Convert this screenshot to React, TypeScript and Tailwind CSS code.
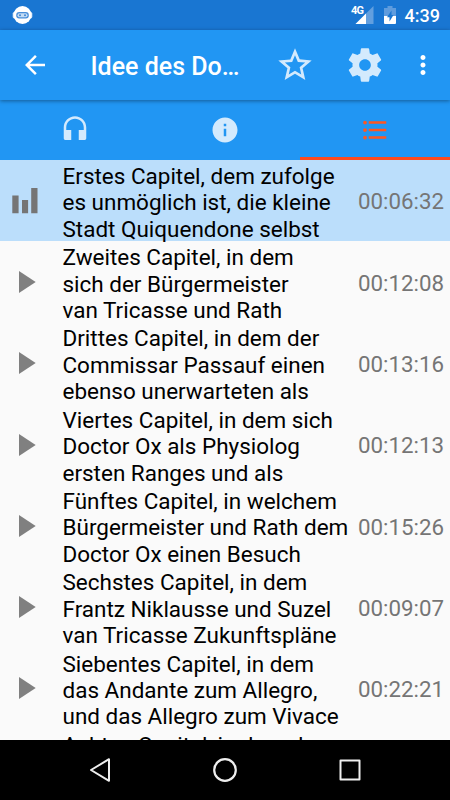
import React from 'react';

type Chapter = {
  lines: string[];
  time: string;
  active?: boolean;
};

const chapters: Chapter[] = [
  { lines: ['Erstes Capitel, dem zufolge', 'es unmöglich ist, die kleine', 'Stadt Quiquendone selbst'], time: '00:06:32', active: true },
  { lines: ['Zweites Capitel, in dem', 'sich der Bürgermeister', 'van Tricasse und Rath'], time: '00:12:08' },
  { lines: ['Drittes Capitel, in dem der', 'Commissar Passauf einen', 'ebenso unerwarteten als'], time: '00:13:16' },
  { lines: ['Viertes Capitel, in dem sich', 'Doctor Ox als Physiolog', 'ersten Ranges und als'], time: '00:12:13' },
  { lines: ['Fünftes Capitel, in welchem', 'Bürgermeister und Rath dem', 'Doctor Ox einen Besuch'], time: '00:15:26' },
  { lines: ['Sechstes Capitel, in dem', 'Frantz Niklausse und Suzel', 'van Tricasse Zukunftspläne'], time: '00:09:07' },
  { lines: ['Siebentes Capitel, in dem', 'das Andante zum Allegro,', 'und das Allegro zum Vivace'], time: '00:22:21' },
  { lines: ['Achtes Capitel, in dem der'], time: '' },
];

const Icon: React.FC<{ d: string; className: string }> = ({ d, className }) => (
  <svg viewBox="0 0 24 24" fill="currentColor" className={className}>
    <path d={d} />
  </svg>
);

const StatusBar: React.FC = () => (
  <div className="flex h-[30px] shrink-0 items-center bg-[#1976d2] pl-[12px] pr-[10px] text-white">
    <svg width="21" height="20" viewBox="0 0 21 20">
      <rect x="0.7" y="7" width="4" height="6.4" rx="1.6" fill="#d5e5f6" />
      <rect x="16.3" y="7" width="4" height="6.4" rx="1.6" fill="#d5e5f6" />
      <circle cx="10.5" cy="10" r="9" fill="#fff" />
      <rect x="4.2" y="7" width="12.6" height="6.6" rx="3" fill="#4a8fd9" />
      <rect x="5.5" y="8.3" width="10" height="4" rx="2" fill="#c4dcf4" />
      <circle cx="8" cy="10.3" r="1" fill="#3f86d4" />
      <circle cx="13" cy="10.3" r="1" fill="#3f86d4" />
    </svg>
    <div className="ml-auto flex items-center">
      <div className="relative h-[18px] w-[23px]">
        <svg width="23" height="18" viewBox="0 0 23 18">
          <path d="M22.5 0v18H4.5z" fill="#629fdf" />
          <path d="M15 7.5V18H4.5z" fill="#fff" />
        </svg>
        <span className="absolute left-0 top-0 text-[11px] font-bold leading-[10px] tracking-[-0.8px]">4G</span>
      </div>
      <svg width="12" height="18" viewBox="0 0 12 18" className="ml-[9.5px]">
        <path d="M3.5 0h5v2H12v8H0V2h3.5z" fill="#5e9cde" />
        <path d="M0 10h12v7a1 1 0 0 1-1 1H1a1 1 0 0 1-1-1z" fill="#fff" />
        <path d="M7.5 4.5 3 11.2h2.5v4.3L9.5 9H7.500z" fill="#1976d2" />
      </svg>
      <span className="ml-[9px] pt-[2px] text-[18px] font-medium leading-[28px]">4:39</span>
    </div>
  </div>
);

const Toolbar: React.FC = () => (
  <header className="z-10 flex h-[70px] shrink-0 items-center bg-[#2196f3] pl-[20px] text-white shadow-[0_1px_4px_rgba(0,0,0,0.4)]">
    <Icon className="size-[30px]" d="M20 11H7.83l5.59-5.59L12 4l-8 8 8 8 1.41-1.41L7.83 13H20v-2z" />
    <h1 className="ml-[40.5px] w-[149.5px] whitespace-nowrap pt-[3px] text-[25px] font-medium leading-[67px]">Idee des Do…</h1>
    <Icon
      className="ml-[35px] size-[40px] text-[#d3eafd]"
      d="M22 9.24l-7.19-.62L12 2 9.19 8.63 2 9.24l5.46 4.73L5.82 21 12 17.27 18.18 21l-1.63-7.03L22 9.24zM12 15.4l-3.76 2.27 1-4.28-3.32-2.88 4.38-.38L12 6.1l1.71 4.04 4.38.38-3.32 2.88 1 4.28L12 15.4z"
    />
    <Icon
      className="ml-[30px] size-[40px] text-[#d3eafd]"
      d="M19.43 12.98c.04-.32.07-.64.07-.98s-.03-.66-.07-.98l2.11-1.65c.19-.15.24-.42.12-.64l-2-3.46c-.12-.22-.39-.3-.61-.22l-2.49 1c-.52-.4-1.08-.73-1.69-.98l-.38-2.65C14.46 2.18 14.25 2 14 2h-4c-.25 0-.46.18-.49.42l-.38 2.65c-.61.25-1.17.59-1.69.98l-2.49-1c-.23-.09-.49 0-.61.22l-2 3.46c-.13.22-.07.49.12.64l2.11 1.65c-.04.32-.07.65-.07.98s.03.66.07.98l-2.11 1.65c-.19.15-.24.42-.12.64l2 3.46c.12.22.39.3.61.22l2.49-1c.52.4 1.08.73 1.69.98l.38 2.65c.03.24.24.42.49.42h4c.25 0 .46-.18.49-.42l.38-2.65c.61-.25 1.17-.59 1.69-.98l2.49 1c.23.09.49 0 .61-.22l2-3.46c.12-.22.07-.49-.12-.64l-2.11-1.65zM12 15.5c-1.93 0-3.5-1.57-3.5-3.5s1.57-3.5 3.5-3.5 3.5 1.57 3.5 3.5-1.57 3.5-3.5 3.5z"
    />
    <Icon
      className="ml-[22.5px] size-[30px]"
      d="M12 8c1.1 0 2-.9 2-2s-.9-2-2-2-2 .9-2 2 .9 2 2 2zm0 2c-1.1 0-2 .9-2 2s.9 2 2 2 2-.9 2-2-.9-2-2-2zm0 6c-1.1 0-2 .9-2 2s.9 2 2 2 2-.9 2-2-.9-2-2-2z"
    />
  </header>
);

const Tabs: React.FC = () => (
  <nav className="grid h-[60px] shrink-0 grid-cols-3 bg-[#2196f3] text-[#d3eafd]">
    <button className="flex items-center justify-center">
      <Icon
        className="size-[30px]"
        d="M12 1c-4.97 0-9 4.03-9 9v8.5c0 .83.67 1.5 1.5 1.5H9v-8H5v-2c0-3.87 3.13-7 7-7s7 3.13 7 7v2h-4v8h4.5c.83 0 1.5-.67 1.5-1.5V10c0-4.97-4.03-9-9-9z"
      />
    </button>
    <button className="flex items-center justify-center">
      <Icon
        className="size-[30px]"
        d="M12 2C6.48 2 2 6.48 2 12s4.48 10 10 10 10-4.48 10-10S17.52 2 12 2zm1 15h-2v-6h2v6zm0-8h-2V7h2v2z"
      />
    </button>
    <button className="flex items-center justify-center border-b-[3px] border-[#ff4a1c] pt-[3px] text-[#ff5722]">
      <Icon
        className="size-[30px]"
        d="M7 5h14v2H7zm0 8v-2h14v2zM4 4.5a1.5 1.5 0 1 1 0 3 1.5 1.5 0 0 1 0-3m0 6a1.5 1.5 0 1 1 0 3 1.5 1.5 0 0 1 0-3M7 19v-2h14v2zm-3-2.5a1.5 1.5 0 1 1 0 3 1.5 1.5 0 0 1 0-3"
      />
    </button>
  </nav>
);

const ChapterRow: React.FC<{ chapter: Chapter }> = ({ chapter }) => (
  <li className={chapter.active ? 'flex h-[81.3px] items-center bg-[#bbdefb]' : 'flex h-[81.3px] items-center'}>
    <div className="flex w-[62.5px] shrink-0 pl-[12px] text-[#808080]">
      {chapter.active ? (
        <svg width="26" height="26" viewBox="0 0 26 26" fill="#757575">
          <path d="M.3 7.6h6.3v17.7H.3zM10 12h6.1v13.3H10zM19.2 0h6.3v25.3h-6.3z" />
        </svg>
      ) : (
        <svg width="26" height="22" viewBox="0 0 26 22" fill="currentColor">
          <path d="M7 0v22l16.7-11z" />
        </svg>
      )}
    </div>
    <div className="h-full flex-1 whitespace-nowrap pt-[2.8px] text-[22.48px] leading-[26.4px] text-black">
      {chapter.lines.map((line) => (
        <p key={line}>{line}</p>
      ))}
    </div>
    <span className="pr-[6px] pt-[1.5px] text-[22.3px] leading-[26px] text-[#757575]">{chapter.time}</span>
  </li>
);

const NavBar: React.FC = () => (
  <footer className="flex h-[60px] shrink-0 items-center justify-center gap-[95px] bg-black">
    <svg width="30" height="30" viewBox="0 0 30 30" fill="none" stroke="#eee" strokeWidth="2" strokeLinejoin="round">
      <path d="M24 4.2v21.6L6 15z" />
    </svg>
    <svg width="30" height="30" viewBox="0 0 30 30" fill="none" stroke="#eee" strokeWidth="2.2">
      <circle cx="15" cy="15" r="10.8" />
    </svg>
    <svg width="30" height="30" viewBox="0 0 30 30" fill="none" stroke="#eee" strokeWidth="2" strokeLinejoin="round">
      <path d="M5.5 5.5h19v19h-19z" />
    </svg>
  </footer>
);

const App: React.FC = () => {
  return (
    <div className="flex h-[800px] w-[450px] flex-col overflow-hidden bg-[#fafafa] font-['Roboto',sans-serif]">
      <StatusBar />
      <Toolbar />
      <Tabs />
      <ul className="min-h-0 flex-1 overflow-hidden">
        {chapters.map((chapter) => (
          <ChapterRow key={chapter.lines[0]} chapter={chapter} />
        ))}
      </ul>
      <NavBar />
    </div>
  );
};

export default App;
